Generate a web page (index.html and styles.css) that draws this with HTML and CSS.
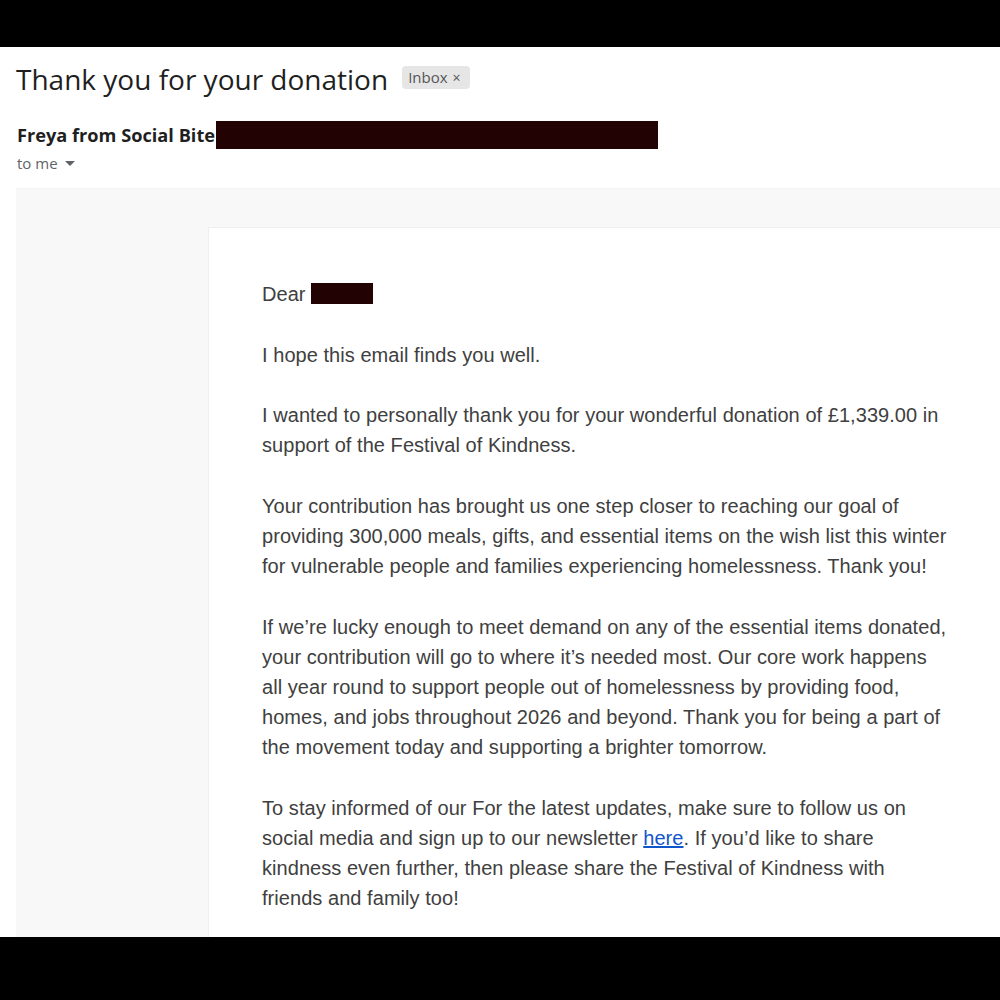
FILE: index.html
```html
<!DOCTYPE html>
<html>
<head>
<meta charset="utf-8">
<link rel="stylesheet" href="styles.css">
</head>
<body>
<div class="bar top"></div>
<main class="mail">
  <div class="subject-row">
    <h1 class="subject">Thank you for your donation</h1>
    <span class="chip">Inbox <span class="chip-x">×</span></span>
  </div>
  <div class="sender-row">
    <span class="sender">Freya from Social Bite</span><span class="redact sender-redact"></span>
  </div>
  <div class="to-me">to me <svg class="caret" width="10" height="6" viewBox="0 0 10 6"><path d="M0 0h10L5 5z" fill="#5f6368"/></svg></div>
  <div class="canvas">
    <div class="card">
      <p>Dear <span class="redact name-redact"></span></p>
      <p>I hope this email finds you well.</p>
      <p>I wanted to personally thank you for your wonderful donation of £1,339.00 in support of the Festival of Kindness.</p>
      <p>Your contribution has brought us one step closer to reaching our goal of providing 300,000 meals, gifts, and essential items on the wish list this winter for vulnerable people and families experiencing homelessness. Thank you!</p>
      <p>If we’re lucky enough to meet demand on any of the essential items donated, your contribution will go to where it’s needed most. Our core work happens all year round to support people out of homelessness by providing food, homes, and jobs throughout 2026 and beyond. Thank you for being a part of the movement today and supporting a brighter tomorrow.</p>
      <p>To stay informed of our For the latest updates, make sure to follow us on social media and sign up to our newsletter <a href="#">here</a>. If you’d like to share kindness even further, then please share the Festival of Kindness with friends and family too!</p>
    </div>
  </div>
</main>
<div class="bar bottom"></div>
</body>
</html>
```

FILE: styles.css
```css
html, body {
  margin: 0;
  padding: 0;
  background: #000;
}
.bar.top { height: 47px; background: #000; }
.bar.bottom { height: 63px; background: #000; }
.mail {
  height: 890px;
  background: #fff;
  overflow: hidden;
  font-family: Roboto, "Liberation Sans", sans-serif;
}
.subject-row {
  display: flex;
  align-items: center;
  padding: 15px 0 0 16px;
  height: 34px;
}
.subject {
  margin: 0;
  font-family: "Open Sans", Roboto, sans-serif;
  font-weight: 400;
  font-size: 28px;
  color: #1f1f1f;
  line-height: 34px;
}
.chip {
  margin-left: 14px;
  background: #e6e6e6;
  color: #555;
  font-family: "Open Sans", sans-serif;
  font-size: 15px;
  line-height: 23px;
  padding: 0 9px 0 6px;
  border-radius: 4px;
  margin-top: -3px;
}
.chip-x { font-size: 14px; margin-left: 1px; }
.sender-row {
  display: flex;
  align-items: center;
  padding: 25px 0 0 17px;
  height: 28px;
}
.sender {
  font-family: "Open Sans", sans-serif;
  font-weight: 700;
  font-size: 18.2px;
  color: #1f1f1f;
}
.redact {
  display: inline-block;
  background: #220202;
}
.sender-redact {
  width: 442px;
  height: 28px;
  margin-left: 1px;
}
.to-me {
  padding-left: 17px;
  margin-top: 4px;
  font-family: "Open Sans", sans-serif;
  font-size: 15px;
  color: #5f6368;
  line-height: 20px;
  height: 20px;
  display: flex;
  align-items: center;
  gap: 7px;
}
.caret { margin-top: 2px; }
.canvas {
  margin: 15px 0 0 16px;
  background: #f8f8f8;
  padding: 38px 0 0 192px;
  border-top: 1px solid #f3f3f3;
}
.card {
  background: #fff;
  border: 1px solid #efefef;
  border-right: none;
  padding: 51px 40px 40px 53px;
  font-family: "Liberation Sans", Arial, sans-serif;
  font-size: 20px;
  line-height: 30.1px;
  color: #404040;
  letter-spacing: 0.05px;
}
.card p { margin: 0 0 30.6px; max-width: 686px; }
.name-redact {
  width: 62px;
  height: 21px;
  vertical-align: -3px;
}
.card a { color: #1155cc; text-decoration: underline; }
```
